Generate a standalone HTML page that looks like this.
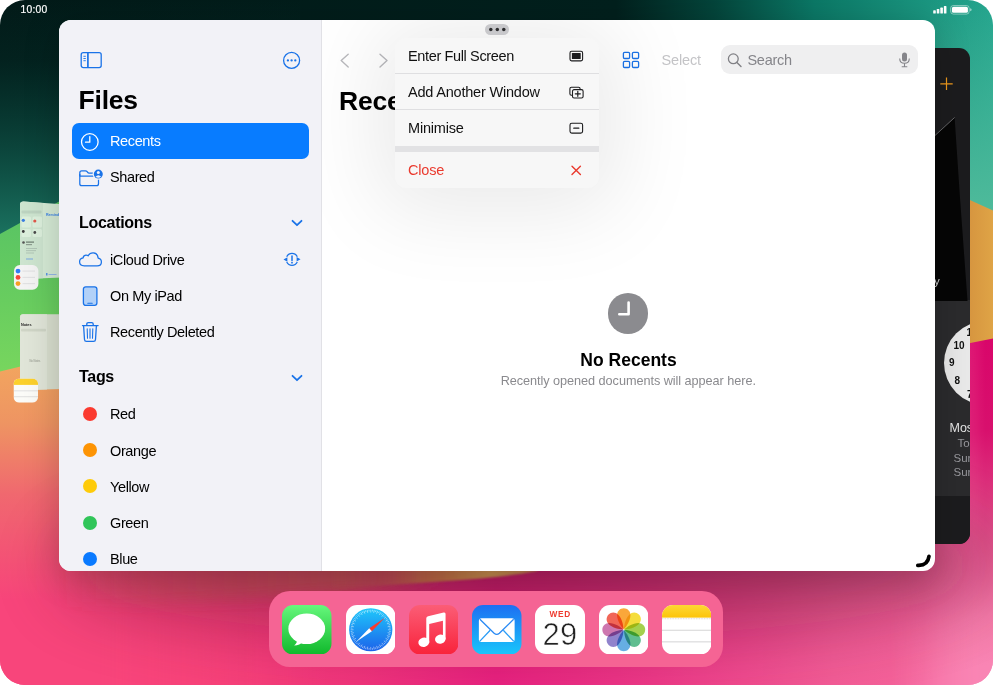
<!DOCTYPE html>
<html lang="en">
<head>
<meta charset="utf-8">
<title>Files</title>
<style>
*{box-sizing:border-box;margin:0;padding:0}
html,body{width:993px;height:685px;overflow:hidden;background:#fff}
body{font-family:"Liberation Sans",sans-serif;color:#000;position:relative}
.abs{position:absolute}
#screen{position:absolute;left:0;top:0;width:993px;height:685px;border-radius:25px;overflow:hidden;background:transparent}
#wall{position:absolute;left:0;top:0;width:993px;height:685px}
.t{position:absolute;white-space:nowrap;line-height:1}
/* window */
#win{position:absolute;left:59px;top:20px;width:876px;height:551.300px;border-radius:12px;background:#fff;overflow:hidden}
#winshadow{position:absolute;left:59px;top:20px;width:876px;height:551.300px;border-radius:12px;box-shadow:0 6px 36px 0 rgba(0,0,0,.2)}
#side{position:absolute;left:0;top:0;width:262.5px;height:552px;background:#f2f2f7;border-right:1px solid #e1e1e6}
.row{position:absolute;left:51px;font-size:14.500px;letter-spacing:-.38px;margin-top:-.3px;line-height:1;white-space:nowrap}
.hd{position:absolute;left:20px;font-size:16px;letter-spacing:-.3px;font-weight:bold;line-height:1;white-space:nowrap}
.dot{position:absolute;left:24px;width:14px;height:14px;border-radius:50%}
/* menu */
#menu{position:absolute;left:72.500px;top:18px;width:204.400px;height:149.5px;border-radius:11px;background:#f7f7f7;box-shadow:0 6px 85px 18px rgba(0,0,0,.085);overflow:hidden}
#menu .mi{position:absolute;left:13.5px;font-size:14.500px;letter-spacing:-.2px;line-height:1;white-space:nowrap;color:#111}
#menu .sep{position:absolute;left:0;width:205px;height:1px;background:#dfdfe1}
/* dock */
#dock{position:absolute;left:268.600px;top:591.400px;width:454.600px;height:76.100px;border-radius:21px;background:#f56494}
.ic{position:absolute;top:605.5px;width:48.5px;height:48.5px;border-radius:11px;overflow:hidden}
</style>
</head>
<body>
<div id="screen">
<svg id="wall" viewBox="0 0 993 685">
  <defs>
    <linearGradient id="gtop" x1="0" y1="0" x2="993" y2="0" gradientUnits="userSpaceOnUse">
      <stop offset="0" stop-color="#021a18"/>
      <stop offset=".62" stop-color="#02201d"/>
      <stop offset=".72" stop-color="#04453b"/>
      <stop offset=".82" stop-color="#0b7866"/>
      <stop offset=".93" stop-color="#1a957f"/>
      <stop offset="1" stop-color="#25a58e"/>
    </linearGradient>
    <linearGradient id="gleft" x1="0" y1="0" x2="0" y2="240" gradientUnits="userSpaceOnUse">
      <stop offset="0" stop-color="#0a5a4e" stop-opacity="0"/>
      <stop offset=".25" stop-color="#0a5a4e" stop-opacity=".12"/>
      <stop offset="1" stop-color="#1c7562" stop-opacity="1"/>
    </linearGradient>
    <linearGradient id="gright" x1="0" y1="0" x2="0" y2="215" gradientUnits="userSpaceOnUse">
      <stop offset="0" stop-color="#4fbb9b" stop-opacity="0"/>
      <stop offset="1" stop-color="#4fbb9b" stop-opacity="1"/>
    </linearGradient>
    <linearGradient id="ggreen" x1="0" y1="225" x2="0" y2="375" gradientUnits="userSpaceOnUse">
      <stop offset="0" stop-color="#5bc563"/>
      <stop offset=".5" stop-color="#68cd5f"/>
      <stop offset="1" stop-color="#78d65e"/>
    </linearGradient>
    <linearGradient id="gorL" x1="0" y1="365" x2="0" y2="600" gradientUnits="userSpaceOnUse">
      <stop offset="0" stop-color="#f2a55f"/>
      <stop offset=".25" stop-color="#ee9462"/>
      <stop offset=".55" stop-color="#f0686f"/>
      <stop offset="1" stop-color="#f8457b"/>
    </linearGradient>
    <linearGradient id="gbot" x1="0" y1="0" x2="993" y2="0" gradientUnits="userSpaceOnUse">
      <stop offset="0" stop-color="#f9437b"/>
      <stop offset=".2" stop-color="#f8407a"/>
      <stop offset=".36" stop-color="#f1357c"/>
      <stop offset=".5" stop-color="#ea2280"/>
      <stop offset=".66" stop-color="#ee3a88"/>
      <stop offset=".84" stop-color="#f25c96"/>
      <stop offset=".93" stop-color="#f5639b"/>
      <stop offset="1" stop-color="#f985b4"/>
    </linearGradient>
    <linearGradient id="gmL" x1="0" y1="0" x2="330" y2="0" gradientUnits="userSpaceOnUse"><stop offset="0" stop-color="#fff"/><stop offset=".3" stop-color="#fff"/><stop offset="1" stop-color="#000"/></linearGradient>
    <mask id="mL" maskUnits="userSpaceOnUse" x="0" y="0" width="993" height="685"><rect width="330" height="685" fill="url(#gmL)"/></mask>
    <filter id="b25" x="-30%" y="-100%" width="160%" height="300%"><feGaussianBlur stdDeviation="36"/></filter>
    <linearGradient id="gsl" x1="60" y1="0" x2="538" y2="0" gradientUnits="userSpaceOnUse">
      <stop offset="0" stop-color="#c85858" stop-opacity="0"/>
      <stop offset=".4" stop-color="#b04a4c" stop-opacity=".5"/>
      <stop offset=".66" stop-color="#ab484a" stop-opacity=".9"/>
      <stop offset=".8" stop-color="#b0643f"/>
      <stop offset=".9" stop-color="#b98448"/>
      <stop offset="1" stop-color="#b07048"/>
    </linearGradient>
    <linearGradient id="gsl2" x1="60" y1="0" x2="440" y2="0" gradientUnits="userSpaceOnUse">
      <stop offset="0" stop-color="#c85858" stop-opacity="0"/>
      <stop offset=".45" stop-color="#b04a4c" stop-opacity=".5"/>
      <stop offset=".75" stop-color="#ab484a" stop-opacity=".85"/>
      <stop offset="1" stop-color="#ab484a" stop-opacity="0"/>
    </linearGradient>
    <linearGradient id="gmS" x1="330" y1="0" x2="420" y2="0" gradientUnits="userSpaceOnUse"><stop offset="0" stop-color="#000"/><stop offset="1" stop-color="#fff"/></linearGradient>
    <mask id="mS" maskUnits="userSpaceOnUse" x="0" y="0" width="993" height="685"><rect x="330" y="540" width="230" height="80" fill="url(#gmS)"/></mask>
    <filter id="b8" x="-20%" y="-80%" width="140%" height="260%"><feGaussianBlur stdDeviation="7"/></filter>
    <filter id="b1" x="-5%" y="-50%" width="110%" height="200%"><feGaussianBlur stdDeviation="1.2"/></filter>
    <linearGradient id="gorR" x1="969" y1="0" x2="993" y2="0" gradientUnits="userSpaceOnUse">
      <stop offset="0" stop-color="#d6953f"/>
      <stop offset="1" stop-color="#dfa446"/>
    </linearGradient>
    <linearGradient id="gmagR" x1="940" y1="340" x2="1010" y2="660" gradientUnits="userSpaceOnUse">
      <stop offset="0" stop-color="#d9056a"/>
      <stop offset=".3" stop-color="#d8106d"/>
      <stop offset=".62" stop-color="#e0508a"/>
      <stop offset=".85" stop-color="#f47aa8"/>
      <stop offset="1" stop-color="#f985b4"/>
    </linearGradient>
    <linearGradient id="gmR" x1="890" y1="0" x2="985" y2="0" gradientUnits="userSpaceOnUse"><stop offset="0" stop-color="#000"/><stop offset="1" stop-color="#fff"/></linearGradient>
    <mask id="mR" maskUnits="userSpaceOnUse" x="0" y="0" width="993" height="685"><rect x="800" width="193" height="685" fill="url(#gmR)"/></mask>
  </defs>
  <rect y="215" width="993" height="470" fill="url(#gbot)"/>
  <!-- left lower orange to pink -->
  <rect x="0" y="360" width="330" height="325" fill="url(#gorL)" mask="url(#mL)"/>
  <!-- right magenta -->
  <rect x="800" y="330" width="193" height="355" fill="url(#gmagR)" mask="url(#mR)"/>
  <ellipse cx="525" cy="566" rx="465" ry="72" fill="#5c0c2a" opacity=".44" filter="url(#b25)"/>
  <path d="M60 556 L440 556 L440 586 Q300 596 60 608 Z" fill="url(#gsl2)" filter="url(#b8)"/>
  <path d="M330 560 L545 560 L537 571 Q505 577.500 440 581.500 Q390 585 330 588.500 Z" fill="url(#gsl)" filter="url(#b1)" mask="url(#mS)"/>
  <!-- top dark -->
  <rect x="0" y="0" width="993" height="250" fill="url(#gtop)"/>
  <rect x="0" y="0" width="300" height="250" fill="url(#gleft)"/>
  <rect x="930" y="0" width="63" height="250" fill="url(#gright)"/>
  <!-- green hill left -->
  <polygon points="0,234 80,190 80,352 0,371.5" fill="url(#ggreen)"/>
  <!-- orange right -->
  <polygon points="930,182 993,210.5 993,338.5 930,351" fill="url(#gorR)"/>

  <!-- stage manager thumbnails -->
  <g>
    <path d="M23.500 201.500 L62 204.300 V277.400 L23 279 q-3 0-3-3 V204.500 q0-3 3.500-3z" fill="#d6ebd6"/>
    <path d="M23.500 201.500 L43 203 V278.200 L23 279 q-3 0-3-3 V204.500 q0-3 3.500-3z" fill="#cde4cf"/>
    <rect x="21.500" y="210.500" width="20" height="3" rx="1" fill="#bcd3c0"/>
    <rect x="21.500" y="216.500" width="9.500" height="11" rx="1.500" fill="#dcefdc"/><rect x="32.500" y="216.500" width="9.500" height="11" rx="1.500" fill="#dcefdc"/>
    <rect x="21.500" y="229" width="9.500" height="8" rx="1.500" fill="#dcefdc"/><rect x="32.500" y="229" width="9.500" height="8" rx="1.500" fill="#dcefdc"/>
    <circle cx="23.300" cy="220.300" r="1.600" fill="#3a7de0"/><circle cx="34.800" cy="221" r="1.600" fill="#e0584a"/>
    <circle cx="23.300" cy="231.500" r="1.400" fill="#3a3a3a"/><circle cx="34.800" cy="232.500" r="1.400" fill="#4a4a4a"/>
    <circle cx="23.500" cy="242.500" r="1.300" fill="#555"/>
    <rect x="26" y="241.500" width="8" height="1.200" fill="#6d7d70"/><rect x="26" y="244" width="6" height="1.200" fill="#8d9d90"/>
    <rect x="26" y="248" width="11" height=".8" fill="#a9bcae"/><rect x="26" y="250.300" width="10" height=".8" fill="#a9bcae"/><rect x="26" y="252.600" width="8" height=".8" fill="#a9bcae"/>
    <rect x="26" y="258.500" width="7" height="1" fill="#7aa6e0"/>
    <text x="46" y="216" style="font-family:'Liberation Sans',sans-serif" font-size="3.600" font-weight="bold" fill="#3b82e6">Reminders</text>
    <rect x="46" y="273" width="1.500" height="2.500" fill="#5a95e6"/><rect x="48.500" y="274" width="8" height=".9" fill="#8db4ea"/>
  </g>
  <g>
    <rect x="14" y="265" width="24.400" height="24.800" rx="5.800" fill="#f3f3f3"/>
    <circle cx="18" cy="271.100" r="2.400" fill="#2f7cf6"/><circle cx="18" cy="277.400" r="2.400" fill="#f4473c"/><circle cx="18" cy="283.600" r="2.400" fill="#f7a024"/>
    <path d="M22.500 271.100 h12.500 M22.500 277.400 h12.500 M22.500 283.600 h12.500" stroke="#d5d5d8" stroke-width=".7"/>
  </g>
  <g>
    <path d="M23 314.300 H62 V389 L23 390 q-3 0-3-3 V317.300 q0-3 3-3z" fill="#d9dfcf"/>
    <path d="M23 314.300 H47 V389.500 L23 390 q-3 0-3-3 V317.300 q0-3 3-3z" fill="#e0e5d8"/>
    <text x="21" y="326.300" style="font-family:'Liberation Sans',sans-serif" font-size="3.800" font-weight="bold" fill="#222">Notes</text>
    <rect x="21" y="328.800" width="25" height="2.600" rx="1" fill="#cfd5c6"/>
    <text x="29.500" y="362" style="font-family:'Liberation Sans',sans-serif" font-size="2.600" fill="#8a8f84">No Notes</text>
  </g>
  <g>
    <clipPath id="cnote"><rect x="13.500" y="378.500" width="24.600" height="24.200" rx="5.600"/></clipPath>
    <g clip-path="url(#cnote)">
      <rect x="13.500" y="378.500" width="24.600" height="24.200" fill="#fbfbf8"/>
      <rect x="13.500" y="378.500" width="24.600" height="6.400" fill="#fbd02c"/>
      <path d="M13.500 390.800 h24.600 M13.500 396.700 h24.600" stroke="#cfcfd0" stroke-width=".6"/>
    </g>
  </g>
</svg>

<!-- status bar -->
<div class="t" style="left:20.500px;top:4.600px;font-size:10.300px;color:#fff;letter-spacing:.25px;-webkit-text-stroke:.2px #fff">10:00</div>
<svg class="abs" style="left:930px;top:3px" width="45" height="14" viewBox="0 0 45 14">
  <rect x="3.200" y="7.300" width="2.600" height="3.300" rx=".6" fill="#fff"/>
  <rect x="6.750" y="6" width="2.600" height="4.600" rx=".6" fill="#fff"/>
  <rect x="10.300" y="4.600" width="2.600" height="6" rx=".6" fill="#fff"/>
  <rect x="13.850" y="3.100" width="2.600" height="7.500" rx=".6" fill="#fff"/>
  <rect x="20.6" y="2.5" width="18.6" height="8.6" rx="2.8" fill="none" stroke="#fff" stroke-opacity=".55" stroke-width=".8"/>
  <rect x="21.9" y="3.8" width="16" height="6" rx="1.6" fill="#fff"/>
  <path d="M40.2 5.3 q1.4 .4 1.4 1.5 t-1.4 1.5z" fill="#fff" fill-opacity=".6"/>
</svg>

<!-- clock window behind -->
<div id="clockwin" class="abs" style="left:900px;top:47.5px;width:69.5px;height:496px;border-radius:11px;background:#1c1c1e;overflow:hidden">
  <div class="abs" style="left:0;top:252px;width:70px;height:196px;background:#2b2b2d"></div>
  <div class="abs" style="left:0;top:448px;width:70px;height:50px;background:#1c1c1e"></div>
  <svg class="abs" style="left:0;top:0" width="70" height="300" viewBox="0 0 70 300">
    <polygon points="35,87.500 54.600,69.500 60,150 67.500,253 35,253" fill="#060606"/>
    <path d="M35 87.500 L54.600 69.500" stroke="#8a8a8c" stroke-width=".7" fill="none"/>
    <path d="M40.300 35.800 h12.400 M46.500 29.600 v12.400" stroke="#f09a1c" stroke-width="1.200" fill="none"/>
  </svg>
  <div class="t" style="left:34px;top:228px;font-size:11.5px;color:#d8d8d8">y</div>
  <div class="abs" style="left:43.5px;top:273px;width:84px;height:84px;border-radius:50%;background:#e9e9e9"></div>
  <div class="t" style="left:66.5px;top:280.2px;font-size:10px;font-weight:bold;color:#111">11</div>
  <div class="t" style="left:53.5px;top:293.7px;font-size:10px;font-weight:bold;color:#111">10</div>
  <div class="t" style="left:49px;top:310.9px;font-size:10px;font-weight:bold;color:#111">9</div>
  <div class="t" style="left:54.5px;top:328.7px;font-size:10px;font-weight:bold;color:#111">8</div>
  <div class="t" style="left:67px;top:342.2px;font-size:10px;font-weight:bold;color:#111">7</div>
  <div class="t" style="left:49.5px;top:374px;font-size:12.5px;color:#e6e6e6">Moscow</div>
  <div class="t" style="left:57.5px;top:390px;font-size:11.5px;color:#98989d">Today</div>
  <div class="t" style="left:53.5px;top:405px;font-size:11.5px;color:#98989d">Sunrise</div>
  <div class="t" style="left:53.5px;top:419.5px;font-size:11.5px;color:#98989d">Sunset</div>
</div>

<!-- files window -->
<div id="winshadow"></div>
<div id="win">
  <div id="side">
    <svg class="abs" style="left:20px;top:30px" width="26" height="22" viewBox="0 0 26 22">
      <rect x="2.2" y="2.6" width="20" height="15" rx="2.1" fill="none" stroke="#1a73e8" stroke-width="1.3"/>
      <path d="M8.900 2.6 v15" stroke="#1a73e8" stroke-width="1.700"/>
      <path d="M4.4 6.3 h2.4 M4.4 8.5 h2.4 M4.4 10.7 h2.4" stroke="#1a73e8" stroke-width=".9"/>
    </svg>
    <svg class="abs" style="left:222px;top:30px" width="22" height="22" viewBox="0 0 22 22">
      <circle cx="10.6" cy="10.4" r="8" fill="none" stroke="#1a73e8" stroke-width="1.3"/>
      <circle cx="6.9" cy="10.4" r="1.15" fill="#1a73e8"/><circle cx="10.6" cy="10.4" r="1.15" fill="#1a73e8"/><circle cx="14.3" cy="10.4" r="1.15" fill="#1a73e8"/>
    </svg>
    <div class="t" style="left:19.5px;top:67px;font-size:26.5px;font-weight:bold;letter-spacing:-.2px">Files</div>
    <div class="abs" style="left:13px;top:103px;width:236.5px;height:36px;border-radius:7px;background:#087cff"></div>
    <svg class="abs" style="left:20.250px;top:110.600px" width="22" height="22" viewBox="0 0 22 22">
      <circle cx="10.8" cy="11" r="8.3" fill="none" stroke="#fff" stroke-width="1.3"/>
      <path d="M10.8 5.6 v5.6 h-4.3" fill="none" stroke="#fff" stroke-width="1.3" stroke-linecap="round" stroke-linejoin="round"/>
    </svg>
    <div class="row" style="top:114.1px;color:#fff">Recents</div>
    <svg class="abs" style="left:18px;top:146px" width="28" height="22" viewBox="0 0 28 22">
      <path d="M2.800 8 v9.700 q0 2 2 2 h14.700 q2 0 2-2 v-6" fill="none" stroke="#1a73e8" stroke-width="1.250"/>
      <path d="M2.800 10.200 v-3.500 q0-1.900 1.900-1.900 h3.800 q1 0 1.600 .8 l.7 .9 q.4 .5 1.200 .5 h5" fill="none" stroke="#1a73e8" stroke-width="1.250"/>
      <path d="M2.800 10.100 h15" stroke="#1a73e8" stroke-width="1.250"/>
      <circle cx="21.300" cy="8.100" r="5.700" fill="#f2f2f7"/>
      <circle cx="21.300" cy="8.100" r="4.500" fill="#1a73e8"/>
      <circle cx="21.300" cy="6.600" r="1.500" fill="#f2f2f7"/>
      <path d="M18.500 10.700 q2.800-3.100 5.600 0 q-2.800 2.200-5.600 0z" fill="#f2f2f7"/>
    </svg>
    <div class="row" style="top:150.1px">Shared</div>

    <div class="hd" style="top:194.5px">Locations</div>
    <svg class="abs" style="left:230.700px;top:197.400px" width="14" height="12" viewBox="0 0 14 12"><path d="M2.5 3.8 L7 8.2 L11.5 3.8" fill="none" stroke="#1a73e8" stroke-width="1.800" stroke-linecap="round" stroke-linejoin="round"/></svg>

    <svg class="abs" style="left:18px;top:228px" width="28" height="22" viewBox="0 0 28 22">
      <path d="M7.2 17.8 q-4.6 0-4.6-4 q0-3.300 3.500-3.900 q.2-2.600 2.800-2.800 q1.300-.100 2.300 .7 q1.700-3.100 5.200-2.900 q4.300 .4 4.800 5.200 q3.200 .6 3.200 3.800 q0 3.900-4.300 3.900 z" fill="none" stroke="#1a73e8" stroke-width="1.25" stroke-linejoin="round"/>
    </svg>
    <div class="row" style="top:232.8px">iCloud Drive</div>
    <svg class="abs" style="left:221px;top:228px" width="24" height="22" viewBox="0 0 24 22">
      <path d="M6.700 8.800 A5.900 5.900 0 0 1 17.300 8.800" fill="none" stroke="#1a73e8" stroke-width="1.250"/>
      <path d="M17.300 14 A5.900 5.900 0 0 1 6.700 14" fill="none" stroke="#1a73e8" stroke-width="1.250"/>
      <path d="M3.500 11.600 L7.400 9.300 V13.700z" fill="#1a73e8"/>
      <path d="M20.500 11.200 L16.600 9.100 V13.500z" fill="#1a73e8"/>
      <path d="M12 8 v4.400" stroke="#1a73e8" stroke-width="1.500" stroke-linecap="round"/>
      <circle cx="12" cy="14.700" r=".9" fill="#1a73e8"/>
    </svg>

    <svg class="abs" style="left:20px;top:264px" width="22" height="24" viewBox="0 0 22 24">
      <rect x="4.400" y="2.800" width="13.500" height="18.600" rx="2.300" fill="#b2d1f8" stroke="#1a73e8" stroke-width="1.300"/>
      <path d="M8.800 19.200 h4.400" stroke="#1a73e8" stroke-width="1.100" stroke-linecap="round"/>
    </svg>
    <div class="row" style="top:269px">On My iPad</div>

    <svg class="abs" style="left:20px;top:300px" width="22" height="24" viewBox="0 0 22 24">
      <path d="M3.500 5.600 h15.600" stroke="#1a73e8" stroke-width="1.300" stroke-linecap="round"/>
      <path d="M7.800 5.400 v-1.300 q0-1.500 1.500-1.500 h3.400 q1.500 0 1.500 1.500 v1.300" fill="none" stroke="#1a73e8" stroke-width="1.300"/>
      <path d="M4.600 5.800 l.9 13.700 q.1 1.900 2 1.900 h7 q1.900 0 2-1.900 l.9-13.700" fill="none" stroke="#1a73e8" stroke-width="1.300"/>
      <path d="M8.200 8.800 l.3 9.400 M11 8.800 v9.400 M13.800 8.800 l-.3 9.400" stroke="#1a73e8" stroke-width="1.100" stroke-linecap="round"/>
    </svg>
    <div class="row" style="top:305.2px">Recently Deleted</div>

    <div class="hd" style="top:349.0px">Tags</div>
    <svg class="abs" style="left:230.700px;top:351.900px" width="14" height="12" viewBox="0 0 14 12"><path d="M2.500 3.800 L7 8.200 L11.500 3.800" fill="none" stroke="#1a73e8" stroke-width="1.800" stroke-linecap="round" stroke-linejoin="round"/></svg>

    <div class="dot" style="top:387px;background:#fb3b30"></div><div class="row" style="top:387.7px">Red</div>
    <div class="dot" style="top:423.200px;background:#fd9404"></div><div class="row" style="top:423.8px">Orange</div>
    <div class="dot" style="top:459.400px;background:#fecb09"></div><div class="row" style="top:460px">Yellow</div>
    <div class="dot" style="top:495.500px;background:#31c559"></div><div class="row" style="top:495.8px">Green</div>
    <div class="dot" style="top:531.600px;background:#0a7aff"></div><div class="row" style="top:531.9px">Blue</div>
  </div>

  <!-- main pane -->
  <svg class="abs" style="left:276px;top:30px" width="60" height="22" viewBox="0 0 60 22">
    <path d="M13.200 4.200 L6.200 10.600 L13.200 17" fill="none" stroke="#b9b9bd" stroke-width="1.400" stroke-linecap="round" stroke-linejoin="round"/>
    <path d="M45 4.200 L52 10.600 L45 17" fill="none" stroke="#b9b9bd" stroke-width="1.400" stroke-linecap="round" stroke-linejoin="round"/>
  </svg>
  <div class="t" style="left:280px;top:67.600px;font-size:26.500px;font-weight:bold;letter-spacing:-.2px">Recents</div>

  <svg class="abs" style="left:561px;top:29px" width="22" height="22" viewBox="0 0 22 22">
    <rect x="3.400" y="3.300" width="6.200" height="6.200" rx="1.200" fill="none" stroke="#1a73e8" stroke-width="1.300"/>
    <rect x="12.400" y="3.300" width="6.200" height="6.200" rx="1.200" fill="none" stroke="#1a73e8" stroke-width="1.300"/>
    <rect x="3.400" y="12.300" width="6.200" height="6.200" rx="1.200" fill="none" stroke="#1a73e8" stroke-width="1.300"/>
    <rect x="12.400" y="12.300" width="6.200" height="6.200" rx="1.200" fill="none" stroke="#1a73e8" stroke-width="1.300"/>
  </svg>
  <div class="t" style="left:602.500px;top:33px;font-size:14.500px;letter-spacing:-.15px;color:#c4c4c7">Select</div>
  <div class="abs" style="left:661.900px;top:24.900px;width:197.200px;height:29.600px;border-radius:9px;background:#efeff0"></div>
  <svg class="abs" style="left:667px;top:31px" width="18" height="18" viewBox="0 0 18 18">
    <circle cx="7.300" cy="7.800" r="4.900" fill="none" stroke="#808085" stroke-width="1.300"/>
    <path d="M10.900 11.500 L15 15.600" stroke="#808085" stroke-width="1.400" stroke-linecap="round"/>
  </svg>
  <div class="t" style="left:688.500px;top:32.800px;font-size:14.500px;letter-spacing:-.3px;color:#85858a">Search</div>
  <svg class="abs" style="left:838px;top:30px" width="16" height="20" viewBox="0 0 16 20">
    <rect x="5" y="2.400" width="5" height="9.200" rx="2.500" fill="#85858a"/>
    <path d="M2.700 8.500 q0 4.800 4.800 4.800 t4.800-4.800" fill="none" stroke="#85858a" stroke-width="1.100"/>
    <path d="M7.500 13.300 v3.400 M4.700 16.800 h5.600" stroke="#85858a" stroke-width="1.100"/>
  </svg>

  <!-- empty state -->
  <div class="abs" style="left:548.600px;top:273.100px;width:40.500px;height:40.500px;border-radius:50%;background:#8b8b8f"></div>
  <svg class="abs" style="left:548.800px;top:273.400px" width="40" height="40" viewBox="0 0 40 40">
    <path d="M20.600 9.500 v11.700 h-9.300" fill="none" stroke="#fff" stroke-width="2.600" stroke-linecap="round" stroke-linejoin="round"/>
  </svg>
  <div class="t" style="left:369.500px;top:331.500px;width:400px;text-align:center;font-size:17.500px;font-weight:bold">No Recents</div>
  <div class="t" style="left:369.300px;top:355px;width:400px;text-align:center;font-size:12.700px;letter-spacing:-.05px;color:#8a8a8e">Recently opened documents will appear here.</div>

  <!-- resize handle -->
  <svg class="abs" style="left:850px;top:528px" width="26" height="24" viewBox="0 0 26 24">
    <path d="M8.800 17.300 Q18.800 17.800 20 8.300" fill="none" stroke="#000" stroke-width="3.700" stroke-linecap="round"/>
  </svg>
</div>

<!-- three dots pill -->
<div class="abs" style="left:484.600px;top:24px;width:24.800px;height:11.200px;border-radius:5.600px;background:#d2d2d5"></div>
<svg class="abs" style="left:484.600px;top:24px" width="24.800" height="11.200" viewBox="0 0 24.800 11.200">
  <circle cx="5.800" cy="5.600" r="1.750" fill="#303032"/><circle cx="12.300" cy="5.600" r="1.750" fill="#303032"/><circle cx="18.800" cy="5.600" r="1.750" fill="#303032"/>
</svg>

<!-- menu -->
<div class="abs" style="left:322px;top:20px;width:613px;height:551.500px;overflow:hidden;border-radius:0 12px 12px 0;pointer-events:none">
<div id="menu">
  <div class="mi" style="top:10.900px;letter-spacing:-.36px">Enter Full Screen</div>
  <div class="sep" style="top:35px"></div>
  <div class="mi" style="top:46.900px">Add Another Window</div>
  <div class="sep" style="top:71px"></div>
  <div class="mi" style="top:82.900px">Minimise</div>
  <div class="sep" style="top:108px;height:6px;background:#e2e2e4"></div>
  <div class="mi" style="top:124.900px;color:#ea3a2e">Close</div>
  <svg class="abs" style="left:171.400px;top:8px" width="22" height="22" viewBox="0 0 22 22">
    <rect x="4" y="5.300" width="12.600" height="9.600" rx="1.600" fill="none" stroke="#1c1c1e" stroke-width="1.100"/>
    <rect x="5.900" y="7.100" width="8.800" height="6" rx=".5" fill="#1c1c1e"/>
  </svg>
  <svg class="abs" style="left:171.400px;top:44px" width="22" height="22" viewBox="0 0 22 22">
    <path d="M6 13.300 h-.6 q-1.500 0-1.500-1.500 v-5 q0-1.500 1.500-1.500 h7.200 q1.500 0 1.500 1.500 v.5" fill="none" stroke="#1c1c1e" stroke-width="1.100"/>
    <rect x="6.500" y="7.600" width="10.600" height="8.400" rx="1.600" fill="none" stroke="#1c1c1e" stroke-width="1.100"/>
    <path d="M9.300 11.800 h5 M11.800 9.300 v5" stroke="#1c1c1e" stroke-width="1.200" stroke-linecap="round"/>
  </svg>
  <svg class="abs" style="left:171.400px;top:80px" width="22" height="22" viewBox="0 0 22 22">
    <rect x="4" y="5.300" width="12.600" height="9.800" rx="1.800" fill="none" stroke="#1c1c1e" stroke-width="1.100"/>
    <path d="M7.800 10.200 h5" stroke="#1c1c1e" stroke-width="1.300" stroke-linecap="round"/>
  </svg>
  <svg class="abs" style="left:171.400px;top:122px" width="22" height="22" viewBox="0 0 22 22">
    <path d="M6 6.200 L14.400 14.600 M14.400 6.200 L6 14.600" stroke="#ea3a2e" stroke-width="1.400" stroke-linecap="round"/>
  </svg>
</div>

</div>
<!-- dock -->

<div id="dock"></div>
<svg class="abs" style="left:282px;top:604.500px" width="49.500" height="49.500" viewBox="0 0 49 49">
  <defs><linearGradient id="gm" x1="0" y1="0" x2="0" y2="1"><stop offset="0" stop-color="#66f77c"/><stop offset="1" stop-color="#10b92c"/></linearGradient></defs>
  <rect width="49" height="49" rx="11" fill="url(#gm)"/>
  <ellipse cx="24.500" cy="23.500" rx="18.200" ry="15.200" fill="#fff"/>
  <path d="M15.500 33.500 q-.6 4.600-3.500 6.600 q5.400-.2 9.500-4.300z" fill="#fff"/>
</svg>
<svg class="abs" style="left:345.500px;top:604.500px" width="49.500" height="49.500" viewBox="0 0 49 49">
  <defs><linearGradient id="gs" x1="0" y1="0" x2="0" y2="1"><stop offset="0" stop-color="#1fc8fb"/><stop offset="1" stop-color="#1c62ea"/></linearGradient></defs>
  <rect width="49" height="49" rx="11" fill="#fff"/>
  <circle cx="24.500" cy="24.500" r="21.400" fill="url(#gs)"/>
  <path d="M24.500 4.600 v2.9" stroke="#fff" stroke-width=".5" stroke-opacity=".9" transform="rotate(0 24.500 24.500)"/><path d="M24.500 4.600 v1.7" stroke="#fff" stroke-width=".5" stroke-opacity=".9" transform="rotate(5 24.500 24.500)"/><path d="M24.500 4.600 v2.9" stroke="#fff" stroke-width=".5" stroke-opacity=".9" transform="rotate(10 24.500 24.500)"/><path d="M24.500 4.600 v1.7" stroke="#fff" stroke-width=".5" stroke-opacity=".9" transform="rotate(15 24.500 24.500)"/><path d="M24.500 4.600 v2.9" stroke="#fff" stroke-width=".5" stroke-opacity=".9" transform="rotate(20 24.500 24.500)"/><path d="M24.500 4.600 v1.7" stroke="#fff" stroke-width=".5" stroke-opacity=".9" transform="rotate(25 24.500 24.500)"/><path d="M24.500 4.600 v2.9" stroke="#fff" stroke-width=".5" stroke-opacity=".9" transform="rotate(30 24.500 24.500)"/><path d="M24.500 4.600 v1.7" stroke="#fff" stroke-width=".5" stroke-opacity=".9" transform="rotate(35 24.500 24.500)"/><path d="M24.500 4.600 v2.9" stroke="#fff" stroke-width=".5" stroke-opacity=".9" transform="rotate(40 24.500 24.500)"/><path d="M24.500 4.600 v1.7" stroke="#fff" stroke-width=".5" stroke-opacity=".9" transform="rotate(45 24.500 24.500)"/><path d="M24.500 4.600 v2.9" stroke="#fff" stroke-width=".5" stroke-opacity=".9" transform="rotate(50 24.500 24.500)"/><path d="M24.500 4.600 v1.7" stroke="#fff" stroke-width=".5" stroke-opacity=".9" transform="rotate(55 24.500 24.500)"/><path d="M24.500 4.600 v2.9" stroke="#fff" stroke-width=".5" stroke-opacity=".9" transform="rotate(60 24.500 24.500)"/><path d="M24.500 4.600 v1.7" stroke="#fff" stroke-width=".5" stroke-opacity=".9" transform="rotate(65 24.500 24.500)"/><path d="M24.500 4.600 v2.9" stroke="#fff" stroke-width=".5" stroke-opacity=".9" transform="rotate(70 24.500 24.500)"/><path d="M24.500 4.600 v1.7" stroke="#fff" stroke-width=".5" stroke-opacity=".9" transform="rotate(75 24.500 24.500)"/><path d="M24.500 4.600 v2.9" stroke="#fff" stroke-width=".5" stroke-opacity=".9" transform="rotate(80 24.500 24.500)"/><path d="M24.500 4.600 v1.7" stroke="#fff" stroke-width=".5" stroke-opacity=".9" transform="rotate(85 24.500 24.500)"/><path d="M24.500 4.600 v2.9" stroke="#fff" stroke-width=".5" stroke-opacity=".9" transform="rotate(90 24.500 24.500)"/><path d="M24.500 4.600 v1.7" stroke="#fff" stroke-width=".5" stroke-opacity=".9" transform="rotate(95 24.500 24.500)"/><path d="M24.500 4.600 v2.9" stroke="#fff" stroke-width=".5" stroke-opacity=".9" transform="rotate(100 24.500 24.500)"/><path d="M24.500 4.600 v1.7" stroke="#fff" stroke-width=".5" stroke-opacity=".9" transform="rotate(105 24.500 24.500)"/><path d="M24.500 4.600 v2.9" stroke="#fff" stroke-width=".5" stroke-opacity=".9" transform="rotate(110 24.500 24.500)"/><path d="M24.500 4.600 v1.7" stroke="#fff" stroke-width=".5" stroke-opacity=".9" transform="rotate(115 24.500 24.500)"/><path d="M24.500 4.600 v2.9" stroke="#fff" stroke-width=".5" stroke-opacity=".9" transform="rotate(120 24.500 24.500)"/><path d="M24.500 4.600 v1.7" stroke="#fff" stroke-width=".5" stroke-opacity=".9" transform="rotate(125 24.500 24.500)"/><path d="M24.500 4.600 v2.9" stroke="#fff" stroke-width=".5" stroke-opacity=".9" transform="rotate(130 24.500 24.500)"/><path d="M24.500 4.600 v1.7" stroke="#fff" stroke-width=".5" stroke-opacity=".9" transform="rotate(135 24.500 24.500)"/><path d="M24.500 4.600 v2.9" stroke="#fff" stroke-width=".5" stroke-opacity=".9" transform="rotate(140 24.500 24.500)"/><path d="M24.500 4.600 v1.7" stroke="#fff" stroke-width=".5" stroke-opacity=".9" transform="rotate(145 24.500 24.500)"/><path d="M24.500 4.600 v2.9" stroke="#fff" stroke-width=".5" stroke-opacity=".9" transform="rotate(150 24.500 24.500)"/><path d="M24.500 4.600 v1.7" stroke="#fff" stroke-width=".5" stroke-opacity=".9" transform="rotate(155 24.500 24.500)"/><path d="M24.500 4.600 v2.9" stroke="#fff" stroke-width=".5" stroke-opacity=".9" transform="rotate(160 24.500 24.500)"/><path d="M24.500 4.600 v1.7" stroke="#fff" stroke-width=".5" stroke-opacity=".9" transform="rotate(165 24.500 24.500)"/><path d="M24.500 4.600 v2.9" stroke="#fff" stroke-width=".5" stroke-opacity=".9" transform="rotate(170 24.500 24.500)"/><path d="M24.500 4.600 v1.7" stroke="#fff" stroke-width=".5" stroke-opacity=".9" transform="rotate(175 24.500 24.500)"/><path d="M24.500 4.600 v2.9" stroke="#fff" stroke-width=".5" stroke-opacity=".9" transform="rotate(180 24.500 24.500)"/><path d="M24.500 4.600 v1.7" stroke="#fff" stroke-width=".5" stroke-opacity=".9" transform="rotate(185 24.500 24.500)"/><path d="M24.500 4.600 v2.9" stroke="#fff" stroke-width=".5" stroke-opacity=".9" transform="rotate(190 24.500 24.500)"/><path d="M24.500 4.600 v1.7" stroke="#fff" stroke-width=".5" stroke-opacity=".9" transform="rotate(195 24.500 24.500)"/><path d="M24.500 4.600 v2.9" stroke="#fff" stroke-width=".5" stroke-opacity=".9" transform="rotate(200 24.500 24.500)"/><path d="M24.500 4.600 v1.7" stroke="#fff" stroke-width=".5" stroke-opacity=".9" transform="rotate(205 24.500 24.500)"/><path d="M24.500 4.600 v2.9" stroke="#fff" stroke-width=".5" stroke-opacity=".9" transform="rotate(210 24.500 24.500)"/><path d="M24.500 4.600 v1.7" stroke="#fff" stroke-width=".5" stroke-opacity=".9" transform="rotate(215 24.500 24.500)"/><path d="M24.500 4.600 v2.9" stroke="#fff" stroke-width=".5" stroke-opacity=".9" transform="rotate(220 24.500 24.500)"/><path d="M24.500 4.600 v1.7" stroke="#fff" stroke-width=".5" stroke-opacity=".9" transform="rotate(225 24.500 24.500)"/><path d="M24.500 4.600 v2.9" stroke="#fff" stroke-width=".5" stroke-opacity=".9" transform="rotate(230 24.500 24.500)"/><path d="M24.500 4.600 v1.7" stroke="#fff" stroke-width=".5" stroke-opacity=".9" transform="rotate(235 24.500 24.500)"/><path d="M24.500 4.600 v2.9" stroke="#fff" stroke-width=".5" stroke-opacity=".9" transform="rotate(240 24.500 24.500)"/><path d="M24.500 4.600 v1.7" stroke="#fff" stroke-width=".5" stroke-opacity=".9" transform="rotate(245 24.500 24.500)"/><path d="M24.500 4.600 v2.9" stroke="#fff" stroke-width=".5" stroke-opacity=".9" transform="rotate(250 24.500 24.500)"/><path d="M24.500 4.600 v1.7" stroke="#fff" stroke-width=".5" stroke-opacity=".9" transform="rotate(255 24.500 24.500)"/><path d="M24.500 4.600 v2.9" stroke="#fff" stroke-width=".5" stroke-opacity=".9" transform="rotate(260 24.500 24.500)"/><path d="M24.500 4.600 v1.7" stroke="#fff" stroke-width=".5" stroke-opacity=".9" transform="rotate(265 24.500 24.500)"/><path d="M24.500 4.600 v2.9" stroke="#fff" stroke-width=".5" stroke-opacity=".9" transform="rotate(270 24.500 24.500)"/><path d="M24.500 4.600 v1.7" stroke="#fff" stroke-width=".5" stroke-opacity=".9" transform="rotate(275 24.500 24.500)"/><path d="M24.500 4.600 v2.9" stroke="#fff" stroke-width=".5" stroke-opacity=".9" transform="rotate(280 24.500 24.500)"/><path d="M24.500 4.600 v1.7" stroke="#fff" stroke-width=".5" stroke-opacity=".9" transform="rotate(285 24.500 24.500)"/><path d="M24.500 4.600 v2.9" stroke="#fff" stroke-width=".5" stroke-opacity=".9" transform="rotate(290 24.500 24.500)"/><path d="M24.500 4.600 v1.7" stroke="#fff" stroke-width=".5" stroke-opacity=".9" transform="rotate(295 24.500 24.500)"/><path d="M24.500 4.600 v2.9" stroke="#fff" stroke-width=".5" stroke-opacity=".9" transform="rotate(300 24.500 24.500)"/><path d="M24.500 4.600 v1.7" stroke="#fff" stroke-width=".5" stroke-opacity=".9" transform="rotate(305 24.500 24.500)"/><path d="M24.500 4.600 v2.9" stroke="#fff" stroke-width=".5" stroke-opacity=".9" transform="rotate(310 24.500 24.500)"/><path d="M24.500 4.600 v1.7" stroke="#fff" stroke-width=".5" stroke-opacity=".9" transform="rotate(315 24.500 24.500)"/><path d="M24.500 4.600 v2.9" stroke="#fff" stroke-width=".5" stroke-opacity=".9" transform="rotate(320 24.500 24.500)"/><path d="M24.500 4.600 v1.7" stroke="#fff" stroke-width=".5" stroke-opacity=".9" transform="rotate(325 24.500 24.500)"/><path d="M24.500 4.600 v2.9" stroke="#fff" stroke-width=".5" stroke-opacity=".9" transform="rotate(330 24.500 24.500)"/><path d="M24.500 4.600 v1.7" stroke="#fff" stroke-width=".5" stroke-opacity=".9" transform="rotate(335 24.500 24.500)"/><path d="M24.500 4.600 v2.9" stroke="#fff" stroke-width=".5" stroke-opacity=".9" transform="rotate(340 24.500 24.500)"/><path d="M24.500 4.600 v1.7" stroke="#fff" stroke-width=".5" stroke-opacity=".9" transform="rotate(345 24.500 24.500)"/><path d="M24.500 4.600 v2.9" stroke="#fff" stroke-width=".5" stroke-opacity=".9" transform="rotate(350 24.500 24.500)"/><path d="M24.500 4.600 v1.7" stroke="#fff" stroke-width=".5" stroke-opacity=".9" transform="rotate(355 24.500 24.500)"/>
  <polygon points="38.500,12.700 23,23 25.600,26" fill="#fb3b30"/>
  <polygon points="10.100,36.300 23,23 25.600,26" fill="#fff"/>
</svg>
<svg class="abs" style="left:408.700px;top:604.500px" width="49.500" height="49.500" viewBox="0 0 49 49">
  <defs><linearGradient id="gmu" x1="0" y1="0" x2="0" y2="1"><stop offset="0" stop-color="#fb5d76"/><stop offset="1" stop-color="#f9233b"/></linearGradient></defs>
  <rect width="49" height="49" rx="11" fill="url(#gmu)"/>
  <path d="M17.100 13.300 Q17.100 11.500 18.900 11.050 L34.300 7.450 Q36.200 7 36.200 8.900 V34 H33.600 V15.700 L20 18.800 V37 H17.100 Z" fill="#fff"/>
  <ellipse cx="31" cy="33.800" rx="5.300" ry="4.500" transform="rotate(-16 31 33.800)" fill="#fff"/>
  <ellipse cx="14.700" cy="36.800" rx="5.500" ry="4.600" transform="rotate(-16 14.700 36.800)" fill="#fff"/>
</svg>
<svg class="abs" style="left:472px;top:604.500px" width="49.500" height="49.500" viewBox="0 0 49 49">
  <defs><linearGradient id="gma" x1="0" y1="0" x2="0" y2="1"><stop offset="0" stop-color="#1d6ff2"/><stop offset="1" stop-color="#19c6fb"/></linearGradient></defs>
  <rect width="49" height="49" rx="11" fill="url(#gma)"/>
  <rect x="6.800" y="13.200" width="35.400" height="23.400" rx="2.600" fill="#fff"/>
  <path d="M7.800 14.200 L21.900 27.900 q2.600 2.300 5.200 0 L41.200 14.200" fill="none" stroke="#2a8af4" stroke-width="1.300" stroke-linejoin="round"/>
  <path d="M7.800 35.800 L18 25 M41.200 35.800 L31 25" stroke="#2a9cf6" stroke-width="1.300"/>
</svg>
<div class="abs" style="left:535.200px;top:604.500px;width:49.500px;height:49.500px;border-radius:11px;background:#fff">
  <div class="t" style="left:.4px;top:5.900px;width:49.500px;text-align:center;font-size:8.300px;font-weight:bold;color:#ee3b30;letter-spacing:.7px">WED</div>
  <div class="t" style="left:0;top:14.700px;width:49.500px;text-align:center;font-size:31px;letter-spacing:.3px;color:#222;-webkit-text-stroke:.6px #fff">29</div>
</div>
<svg class="abs" style="left:598.500px;top:604.500px" width="49.500" height="49.500" viewBox="0 0 49 49">
  <rect width="49" height="49" rx="11" fill="#fff"/>
  <g style="isolation:isolate"><g style="mix-blend-mode:multiply"><path d="M24.500 24.000 C21.800 21.500 17.900 15.500 17.900 10.200 C17.900 6.000 20.900 3.300 24.500 3.300 C28.100 3.300 31.100 6.000 31.100 10.200 C31.100 15.500 27.200 21.500 24.500 24.000z" fill="#f99d25" fill-opacity=".9" transform="rotate(0 24.500 24.500)"/></g><g style="mix-blend-mode:multiply"><path d="M24.500 24.000 C21.800 21.500 17.900 15.500 17.900 10.200 C17.900 6.000 20.900 3.300 24.500 3.300 C28.100 3.300 31.100 6.000 31.100 10.200 C31.100 15.500 27.200 21.500 24.500 24.000z" fill="#f4d927" fill-opacity=".9" transform="rotate(45 24.500 24.500)"/></g><g style="mix-blend-mode:multiply"><path d="M24.500 24.000 C21.800 21.500 17.900 15.500 17.900 10.200 C17.900 6.000 20.900 3.300 24.500 3.300 C28.100 3.300 31.100 6.000 31.100 10.200 C31.100 15.500 27.200 21.500 24.500 24.000z" fill="#9acb3a" fill-opacity=".9" transform="rotate(90 24.500 24.500)"/></g><g style="mix-blend-mode:multiply"><path d="M24.500 24.000 C21.800 21.500 17.900 15.500 17.900 10.200 C17.900 6.000 20.900 3.300 24.500 3.300 C28.100 3.300 31.100 6.000 31.100 10.200 C31.100 15.500 27.200 21.500 24.500 24.000z" fill="#4fb784" fill-opacity=".9" transform="rotate(135 24.500 24.500)"/></g><g style="mix-blend-mode:multiply"><path d="M24.500 24.000 C21.800 21.500 17.900 15.500 17.900 10.200 C17.900 6.000 20.900 3.300 24.500 3.300 C28.100 3.300 31.100 6.000 31.100 10.200 C31.100 15.500 27.200 21.500 24.500 24.000z" fill="#55a5e0" fill-opacity=".9" transform="rotate(180 24.500 24.500)"/></g><g style="mix-blend-mode:multiply"><path d="M24.500 24.000 C21.800 21.500 17.900 15.500 17.900 10.200 C17.900 6.000 20.900 3.300 24.500 3.300 C28.100 3.300 31.100 6.000 31.100 10.200 C31.100 15.500 27.200 21.500 24.500 24.000z" fill="#8476c6" fill-opacity=".9" transform="rotate(225 24.500 24.500)"/></g><g style="mix-blend-mode:multiply"><path d="M24.500 24.000 C21.800 21.500 17.900 15.500 17.900 10.200 C17.900 6.000 20.900 3.300 24.500 3.300 C28.100 3.300 31.100 6.000 31.100 10.200 C31.100 15.500 27.200 21.500 24.500 24.000z" fill="#c868a6" fill-opacity=".9" transform="rotate(270 24.500 24.500)"/></g><g style="mix-blend-mode:multiply"><path d="M24.500 24.000 C21.800 21.500 17.900 15.500 17.900 10.200 C17.900 6.000 20.900 3.300 24.500 3.300 C28.100 3.300 31.100 6.000 31.100 10.200 C31.100 15.500 27.200 21.500 24.500 24.000z" fill="#ef5545" fill-opacity=".9" transform="rotate(315 24.500 24.500)"/></g></g>
</svg>
<svg class="abs" style="left:661.700px;top:604.500px" width="49.500" height="49.500" viewBox="0 0 49 49">
  <defs><clipPath id="cn"><rect width="49" height="49" rx="11"/></clipPath>
  <linearGradient id="gn" x1="0" y1="0" x2="0" y2="1"><stop offset="0" stop-color="#fdd835"/><stop offset="1" stop-color="#fcc40a"/></linearGradient></defs>
  <g clip-path="url(#cn)">
    <rect width="49" height="49" fill="#fff"/>
    <rect width="49" height="12.500" fill="url(#gn)"/>
    <path d="M0 13.600 h49" stroke="#bdbdbd" stroke-width=".7" stroke-dasharray=".8 .8"/>
    <path d="M0 25 h49 M0 36.500 h49" stroke="#c9c9cb" stroke-width=".8"/>
  </g>
</svg>
</div>
</body>
</html>
